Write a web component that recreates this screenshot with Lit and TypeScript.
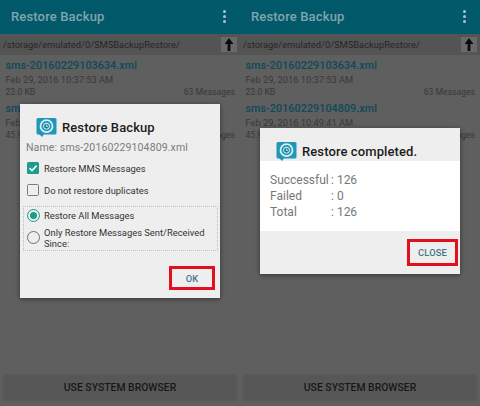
import { LitElement, html, css, svg } from "lit";
import { customElement } from "lit/decorators.js";

const logo = svg`<svg class="logo" width="21" height="19" viewBox="0 0 21 19">
  <rect x="0.5" y="0" width="20" height="16.5" rx="1.5" fill="#1f97b5"/>
  <path d="M3 16h5l-2 3z" fill="#1f97b5"/>
  <circle cx="10.5" cy="8.2" r="6" fill="none" stroke="#d9f0f5" stroke-width="1.8"/>
  <circle cx="10.5" cy="8.2" r="3" fill="#1a7d99" stroke="#e8f6f9" stroke-width="1"/>
  <path d="M10.5 6.4v2h1.6" fill="none" stroke="#fff" stroke-width=".8"/>
</svg>`;

@customElement("phone-screen")
class PhoneScreen extends LitElement {
  static styles = css`
    :host { display: block; position: relative; width: 240px; height: 406px; background: #5f5f5f; overflow: hidden; font-family: Roboto, "Liberation Sans", sans-serif; }
    .bar { height: 34px; background: #02596a; display: flex; align-items: center; justify-content: space-between; padding: 0 14px 2px 11px; box-sizing: border-box; box-shadow: 0 1px 2px rgba(0,0,0,.3); }
    .title { font-size: 13px; font-weight: 500; color: #80a5ad; letter-spacing: .15px; }
    .dots { display: flex; flex-direction: column; gap: 2px; }
    .dots i { width: 3px; height: 3px; border-radius: 50%; background: #a9c6cc; }
    .path { height: 21px; background: #545454; display: flex; align-items: center; justify-content: space-between; padding: 0 3px 0 3px; font-size: 9.35px; color: #262626; }
    .up { width: 16px; height: 15px; background: #6a6a6a; display: flex; align-items: center; justify-content: center; }
    .row { padding: 4px 5px 0 5.5px; height: 43px; box-sizing: border-box; }
    .name { font-size: 10.7px; font-weight: 500; color: #0b4a5b; line-height: 14px; letter-spacing: .1px; white-space: nowrap; }
    .date { font-size: 9.3px; color: #383838; line-height: 13px; white-space: nowrap; }
    .meta { display: flex; justify-content: space-between; font-size: 8.6px; color: #383838; line-height: 12px; }
    .browser { position: absolute; left: 4px; right: 4px; top: 375px; height: 25px; background: #575757; box-shadow: 0 0 2px rgba(0,0,0,.2); display: flex; align-items: center; justify-content: center; font-size: 10.4px; font-weight: 500; color: #171717; }
    ::slotted(*) { position: absolute; }
  `;
  render() {
    return html`
      <div class="bar"><span class="title">Restore Backup</span><span class="dots"><i></i><i></i><i></i></span></div>
      <div class="path"><span>/storage/emulated/0/SMSBackupRestore/</span>
        <span class="up"><svg width="10" height="13" viewBox="0 0 10 13"><path d="M5 0L0.5 6H3.6V13H6.4V6H9.5z" fill="#0c0c0c"/></svg></span></div>
      <div class="list">
        <div class="row"><div class="name">sms-20160229103634.xml</div><div class="date">Feb 29, 2016 10:37:53 AM</div><div class="meta"><span>23.0 KB</span><span>63 Messages</span></div></div>
        <div class="row"><div class="name">sms-20160229104809.xml</div><div class="date">Feb 29, 2016 10:49:41 AM</div><div class="meta"><span>45.9 KB</span><span>63 Messages</span></div></div>
      </div>
      <div class="browser">USE SYSTEM BROWSER</div>
      <slot></slot>
    `;
  }
}

@customElement("app-root")
class AppRoot extends LitElement {
  static styles = css`
    :host { display: block; width: 480px; height: 406px; font-family: Roboto, "Liberation Sans", sans-serif; }
    .wrap { display: flex; }
    .dialog { left: 20px; width: 200px; background: #eeeeee; box-shadow: 0 1px 5px rgba(0,0,0,.45); box-sizing: border-box; color: #2a2a2a; }
    .d1 { top: 104px; height: 194px; padding: 14px 2px 0 3px; }
    .d2 { top: 128px; height: 146px; }
    .head { display: flex; align-items: center; gap: 5px; font-size: 13px; font-weight: 500; color: #1c1c1c; letter-spacing: .1px; white-space: nowrap; }
    .d1 .head { margin-left: 13px; height: 19px; }
    .fname { margin: 3px 0 0 3px; font-size: 10.55px; color: #7c7c7c; line-height: 16px; letter-spacing: .1px; white-space: nowrap; }
    .opt { display: flex; align-items: center; gap: 4px; margin-left: 3px; font-size: 9.4px; color: #333; height: 22px; }
    .check { margin-top: 1px; }
    .box { width: 12px; height: 12px; border-radius: 1.5px; margin: 0 1px 0 1px; display: flex; box-sizing: border-box; border: 1.6px solid #7b7b7b; }
    .box.on { background: #1b9c8c; border: none; }
    .radios { margin: 5px 0 0 0; border: 1px dotted #bdbdbd; padding: 0 0 0 3px; height: 45px; box-sizing: border-box; }
    .radio { width: 13px; height: 13px; border-radius: 50%; box-sizing: border-box; border: 1.5px solid #6f6f6f; flex: none; display: flex; align-items: center; justify-content: center; }
    .radio.on { border-color: #1b9c8c; }
    .radio.on i { width: 7px; height: 7px; border-radius: 50%; background: #1b9c8c; }
    .radio-row { display: flex; align-items: center; gap: 4px; font-size: 9.4px; line-height: 11px; color: #333; white-space: nowrap; }
    .radio-row.first { height: 17px; }
    .radio-row.second { margin-top: 2px; height: 23px; }
    .foot { display: flex; justify-content: flex-end; }
    .action { display: flex; align-items: center; justify-content: center; border: 3px solid #e2101c; box-sizing: border-box; font-size: 9.3px; font-weight: 500; color: #3f7786; letter-spacing: .2px; }
    .d1 .foot { margin: 15px 3px 0 0; }
    .d1 .action { width: 46px; height: 24px; }
    .d2 .head { padding-top: 14px; height: 19px; margin-left: 16px; }
    .res { background: #fff; height: 70px; padding: 12px 10px; box-sizing: border-box; display: grid; grid-template-columns: 61px 1fr; grid-auto-rows: 16px; font-size: 12px; color: #777; align-content: start; }
    .d2 .foot { margin: 8px 2px 0 0; }
    .d2 .action { width: 51px; height: 27px; }
  `;
  render() {
    return html`<div class="wrap">
      <phone-screen>
        <div class="dialog d1">
          <div class="head">${logo}<span>Restore Backup</span></div>
          <div class="fname">Name: sms-20160229104809.xml</div>
          <div class="opt check"><span class="box on"><svg width="12" height="12" viewBox="0 0 12 12"><path d="M2.5 6.2L5 8.6 9.6 3.6" fill="none" stroke="#fff" stroke-width="1.6"/></svg></span><span>Restore MMS Messages</span></div>
          <div class="opt"><span class="box"></span><span>Do not restore duplicates</span></div>
          <div class="radios">
            <div class="radio-row first"><span class="radio on"><i></i></span><span>Restore All Messages</span></div>
            <div class="radio-row second"><span class="radio"></span><span>Only Restore Messages Sent/Received<br />Since:</span></div>
          </div>
          <div class="foot"><div class="action">OK</div></div>
        </div>
      </phone-screen>
      <phone-screen>
        <div class="dialog d2">
          <div class="head">${logo}<span>Restore completed.</span></div>
          <div class="res">
            <span>Successful</span><span>: 126</span>
            <span>Failed</span><span>: 0</span>
            <span>Total</span><span>: 126</span>
          </div>
          <div class="foot"><div class="action">CLOSE</div></div>
        </div>
      </phone-screen>
    </div>`;
  }
}
